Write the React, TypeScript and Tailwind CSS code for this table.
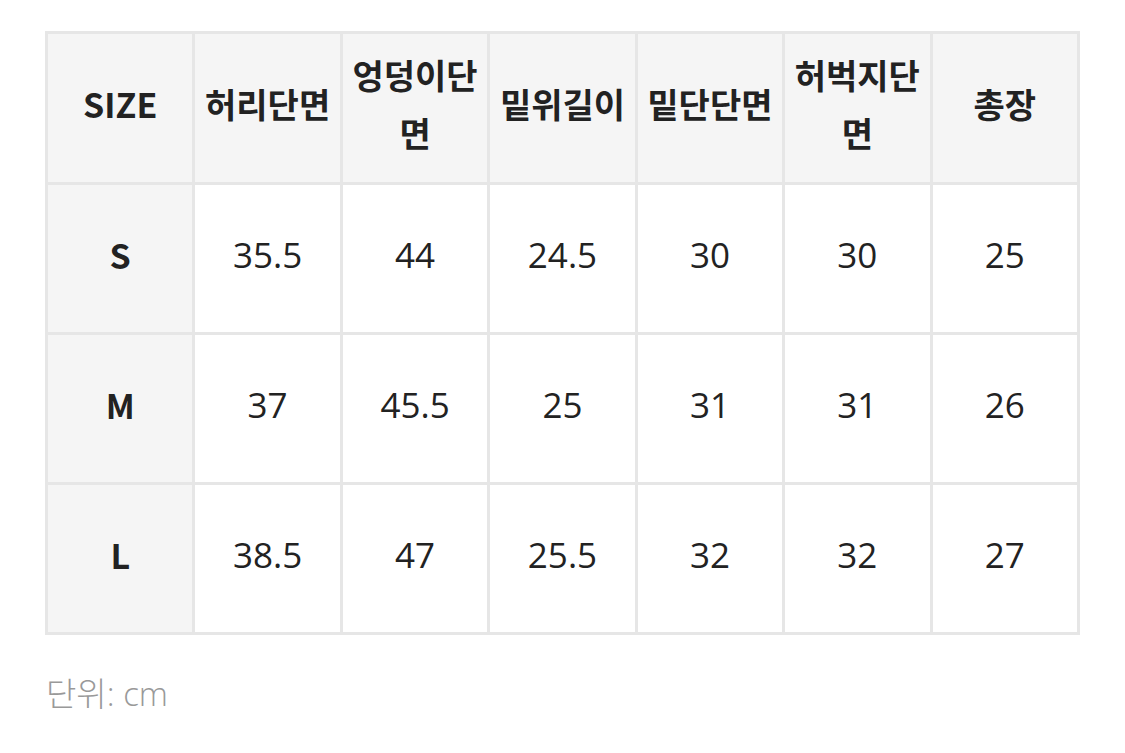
import React from "react";

const headers = ["SIZE", "허리단면", "엉덩이단면", "밑위길이", "밑단단면", "허벅지단면", "총장"];
const rows = [
  ["S", "35.5", "44", "24.5", "30", "30", "25"],
  ["M", "37", "45.5", "25", "31", "31", "26"],
  ["L", "38.5", "47", "25.5", "32", "32", "27"],
];

export default function App() {
  return (
    <div
      className="w-[1125px] h-[753px] bg-white pl-[45px] pt-[31px]"
      style={{ fontFamily: '"Noto Sans CJK KR", "Noto Sans", sans-serif' }}
    >
      <table className="w-[1035px] table-fixed border-collapse text-[#222222]">
        <thead>
          <tr>
            {headers.map((h) => (
              <th
                key={h}
                className="h-[151px] border-[3px] border-[#e6e6e6] bg-[#f5f5f5] px-[4px] pb-[8px] text-center align-middle text-[34px] font-bold leading-[58px]"
              >
                {h}
              </th>
            ))}
          </tr>
        </thead>
        <tbody>
          {rows.map((r) => (
            <tr key={r[0]}>
              {r.map((c, i) => (
                <td
                  key={i}
                  className={
                    i === 0
                      ? "h-[150px] border-[3px] border-[#e6e6e6] bg-[#f5f5f5] pb-[8px] text-center align-middle text-[34px] font-bold"
                      : "h-[150px] border-[3px] border-[#e6e6e6] bg-white pb-[6px] text-center align-middle font-['Open_Sans',sans-serif] text-[35px] font-normal"
                  }
                >
                  {c}
                </td>
              ))}
            </tr>
          ))}
        </tbody>
      </table>
      <div className="mt-[39px] pl-[1px] font-['Open_Sans','Noto_Sans_CJK_KR',sans-serif] text-[33px] font-light leading-[40px] text-[#999999]">
        단위: cm
      </div>
    </div>
  );
}
